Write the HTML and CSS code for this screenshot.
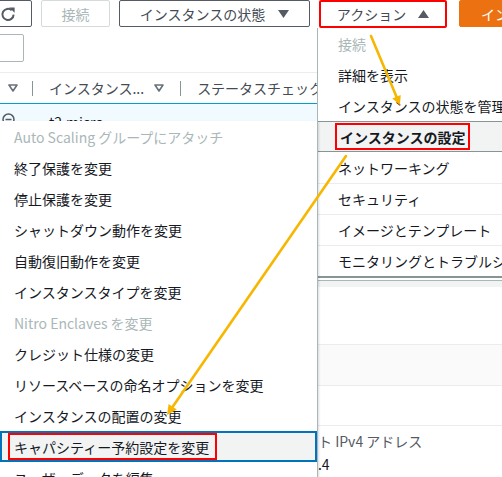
FILE: index.html
```html
<!DOCTYPE html>
<html lang="ja">
<head>
<meta charset="utf-8">
<title>EC2 インスタンス - アクション</title>
<link rel="stylesheet" href="styles.css">
</head>
<body>
<div class="page">
  <div class="toolbar">
    <div class="btn btn-refresh">
      <svg class="ico-refresh" width="16" height="16" viewBox="0 0 16 16"><path d="M13.6 8.6a5.6 5.6 0 1 1-1.9-4.4" fill="none" stroke="#545b64" stroke-width="2"/><path d="M9.2 1.4h5.4v5.4z" fill="#545b64"/></svg>
    </div>
    <div class="btn btn-disabled">接続</div>
    <div class="btn btn-state">インスタンスの状態<svg width="11" height="8" viewBox="0 0 11 8"><path d="M0 0h11L5.5 8z" fill="#545b64"/></svg></div>
    <div class="btn btn-action">アクション<svg width="11" height="8" viewBox="0 0 11 8"><path d="M0 8h11L5.5 0z" fill="#545b64"/></svg></div>
    <div class="btn btn-primary">インスタンスを起動</div>
  </div>
  <div class="search-row"><div class="search"></div></div>
  <div class="thead">
    <svg class="caret" width="10" height="8" viewBox="0 0 10 8"><path d="M1 1h8L5 7z" fill="none" stroke="#687078" stroke-width="1.6" stroke-linejoin="round"/></svg>
    <span class="sep"></span>
    <span class="th">インスタンス...</span>
    <svg class="caret caret-mid" width="10" height="8" viewBox="0 0 10 8"><path d="M1 1h8L5 7z" fill="none" stroke="#687078" stroke-width="1.6" stroke-linejoin="round"/></svg>
    <span class="sep"></span>
    <span class="th">ステータスチェック</span>
  </div>
  <div class="tbody">
    <div class="trow selected">
      <svg class="row-ico" width="13" height="13" viewBox="0 0 13 13"><circle cx="6.5" cy="6.5" r="5.5" fill="none" stroke="#545b64" stroke-width="1.5"/><path d="M3.5 6.5h6" stroke="#545b64" stroke-width="1.5"/></svg>
      <span class="cell">t2.micro</span>
    </div>
  </div>
  <div class="divider"></div>
  <div class="details">
    <div class="drow drow-top"></div>
    <div class="drow drow-alt"></div>
    <div class="drow drow-mid"></div>
    <div class="dgrid">
      <div class="dcol"></div>
      <div class="dcol">
        <div class="dlabel">プライベート IPv4 アドレス</div>
        <div class="dvalue">172.31.140.4</div>
      </div>
    </div>
  </div>
</div>

<div class="menu main-menu">
  <div class="mi mi-disabled">接続</div>
  <div class="mi">詳細を表示</div>
  <div class="mi">インスタンスの状態を管理</div>
  <div class="mi mi-hl"><span class="redbox">インスタンスの設定</span></div>
  <div class="mi">ネットワーキング</div>
  <div class="mi mi-sep">セキュリティ</div>
  <div class="mi mi-sep">イメージとテンプレート</div>
  <div class="mi mi-sep">モニタリングとトラブルシューティング</div>
</div>

<div class="menu sub-menu">
  <div class="si si-disabled">Auto Scaling グループにアタッチ</div>
  <div class="si">終了保護を変更</div>
  <div class="si">停止保護を変更</div>
  <div class="si">シャットダウン動作を変更</div>
  <div class="si">自動復旧動作を変更</div>
  <div class="si">インスタンスタイプを変更</div>
  <div class="si si-disabled">Nitro Enclaves を変更</div>
  <div class="si">クレジット仕様の変更</div>
  <div class="si">リソースベースの命名オプションを変更</div>
  <div class="si">インスタンスの配置の変更</div>
  <div class="si si-hl"><span class="redbox redbox-sub">キャパシティー予約設定を変更</span></div>
  <div class="si">ユーザーデータを編集</div>
</div>

<svg class="arrows" width="502" height="477" viewBox="0 0 502 477">
  <line x1="371" y1="36" x2="396.5" y2="96.7" stroke="#f7b600" stroke-width="2.6" stroke-linecap="round"/>
  <path d="M400 105L400.7 95L392.3 98.5z" fill="#f7b600"/>
  <line x1="346" y1="156" x2="172.7" y2="406.8" stroke="#f7b600" stroke-width="2.6" stroke-linecap="round"/>
  <path d="M167 415L176.8 409.6L168.6 403.9z" fill="#f7b600"/>
</svg>
</body>
</html>
```

FILE: styles.css
```css
html, body {
  margin: 0;
  padding: 0;
}

body {
  width: 502px;
  height: 477px;
  overflow: hidden;
  position: relative;
  background: #ffffff;
  font-family: "Noto Sans CJK JP", "Noto Sans", sans-serif;
  font-size: 14px;
  color: #16191f;
}

.page {
  width: 502px;
}

/* toolbar */
.toolbar {
  display: flex;
  height: 28px;
  gap: 9px;
  align-items: flex-start;
}

.btn {
  flex-shrink: 0;
  box-sizing: border-box;
  height: 27px;
  border: 1px solid #545b64;
  border-radius: 2px;
  background: #ffffff;
  display: flex;
  align-items: center;
  justify-content: center;
  gap: 13px;
  color: #444b54;
  line-height: 1;
  white-space: nowrap;
}

.btn-refresh {
  margin-left: -10px;
  width: 42px;
  justify-content: flex-start;
  padding-left: 9px;
}

.btn-disabled {
  width: 69px;
  border-color: #d5dbdb;
  color: #aab7b8;
}

.btn-state {
  width: 191px;
}

.btn-action {
  width: 128px;
  height: 28px;
  border: 2px solid #ff0000;
  gap: 12px;
}

.btn-primary {
  margin-left: 3px;
  width: 140px;
  background: #ec7211;
  border-color: #ec7211;
  color: #ffffff;
  justify-content: flex-start;
  padding-left: 21px;
}

/* search */
.search-row {
  height: 44px;
  box-sizing: border-box;
  padding-top: 6px;
}

.search {
  margin-left: -16px;
  width: 40px;
  height: 28px;
  box-sizing: border-box;
  border: 1px solid #aab7b8;
  border-radius: 2px;
  background: #ffffff;
}

/* table head */
.thead {
  display: flex;
  align-items: center;
  height: 31px;
  box-sizing: border-box;
  border-top: 1px solid #eaeded;
  padding-left: 8px;
  white-space: nowrap;
  color: #444b54;
}

.caret {
  flex-shrink: 0;
  margin-right: 14px;
}

.caret-mid {
  margin-left: 10px;
  margin-right: 16px;
}

.sep {
  flex-shrink: 0;
  width: 1px;
  height: 15px;
  background: #879596;
  margin-right: 16px;
}

.th {
  line-height: 20px;
}

/* table body */
.tbody {
  height: 174px;
}

.trow {
  display: flex;
  align-items: center;
  height: 36px;
  box-sizing: border-box;
  padding-left: 2px;
}

.trow.selected {
  border-top: 1px solid #00a1c9;
  background: #f1faff;
}

.row-ico {
  align-self: flex-start;
  margin-top: 9px;
  flex-shrink: 0;
}

.cell {
  margin-left: 34px;
}

.divider {
  height: 10px;
  box-sizing: border-box;
  border-top: 1px solid #879596;
  background: linear-gradient(#ffffff 0 2px, #aab7b8 2px 3px, #f2f3f3 3px);
}

/* details */
.drow {
  box-sizing: border-box;
  border-bottom: 1px solid #eaeded;
}

.drow-top {
  height: 58px;
}

.drow-alt {
  height: 41px;
  background: #fafafa;
}

.drow-mid {
  height: 40px;
}

.dgrid {
  display: grid;
  grid-template-columns: 248px 1fr;
  padding-top: 5px;
  white-space: nowrap;
}

.dlabel {
  line-height: 20px;
  color: #545b64;
}

.dvalue {
  margin-top: 3px;
  line-height: 20px;
  color: #16191f;
}

/* menus */
.menu {
  position: absolute;
  background: #ffffff;
  box-sizing: border-box;
  white-space: nowrap;
}

.main-menu {
  left: 317px;
  top: 28px;
  width: 200px;
  border-left: 1px solid #aab7b8;
  border-bottom: 1px solid #879596;
  z-index: 2;
}

.mi {
  height: 31px;
  box-sizing: border-box;
  display: flex;
  align-items: center;
  padding-left: 20px;
}

.mi-disabled {
  color: #aab7b8;
}

.mi-sep {
  border-top: 1px solid #eaeded;
}

.mi-hl {
  background: #f2f3f3;
  border-top: 1px solid #879596;
  border-bottom: 1px solid #879596;
  padding-left: 17px;
  font-weight: 700;
}

.redbox {
  box-sizing: border-box;
  height: 27px;
  display: flex;
  align-items: center;
  border: 2px solid #ff0000;
  padding: 0 3px;
}

.sub-menu {
  left: 0;
  top: 121px;
  width: 318px;
  border-right: 1px solid #aab7b8;
  box-shadow: 1px 1px 2px rgba(0, 28, 36, 0.15);
  z-index: 3;
}

.si {
  height: 31px;
  box-sizing: border-box;
  display: flex;
  align-items: center;
  padding-left: 14px;
}

.si-disabled {
  color: #aab7b8;
}

.si-hl {
  background: #f2f3f3;
  border: 2px solid #0073bb;
  padding-left: 6px;
}

.redbox-sub {
  padding: 0 6px 0 4px;
}

.arrows {
  position: absolute;
  left: 0;
  top: 0;
  z-index: 10;
  pointer-events: none;
}
```
